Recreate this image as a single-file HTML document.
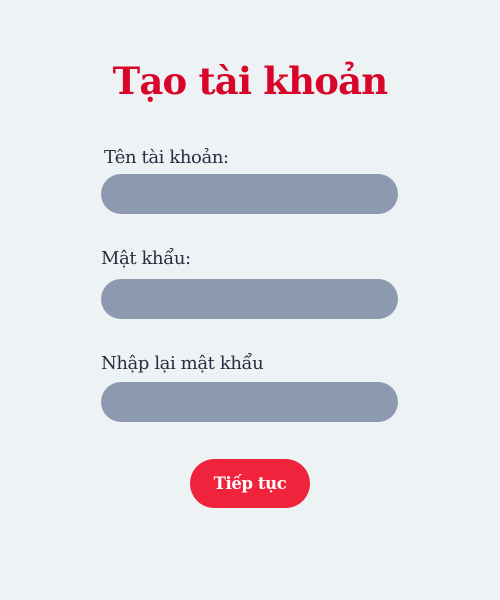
<!DOCTYPE html>
<html><head><meta charset="utf-8"><style>
html,body{margin:0;padding:0;}
body{width:500px;height:600px;background:#edf2f4;font-family:"DejaVu Serif","Liberation Serif",serif;position:relative;overflow:hidden;}
h1{position:absolute;top:56px;left:0;width:500px;text-align:center;margin:0;font-size:37px;line-height:50px;color:#d90429;font-weight:bold;letter-spacing:-0.8px;}
.l{position:absolute;font-size:18px;color:#2b2d42;line-height:24px;letter-spacing:-0.4px;}
.i{position:absolute;left:101px;width:297px;height:40px;border-radius:20px;background:#8d99ae;}
.b{position:absolute;left:190px;top:459px;width:120px;height:49px;border-radius:25px;background:#ef233c;color:#fff;font-weight:bold;font-size:16.5px;line-height:49px;text-align:center;letter-spacing:-0.4px;}
</style></head><body>
<h1>Tạo tài khoản</h1>
<div class="l" style="left:104px;top:146px">Tên tài khoản:</div>
<div class="i" style="top:174px"></div>
<div class="l" style="left:101px;top:247px">Mật khẩu:</div>
<div class="i" style="top:279px"></div>
<div class="l" style="left:101px;top:352px">Nhập lại mật khẩu</div>
<div class="i" style="top:382px"></div>
<div class="b">Tiếp tục</div>
</body></html>
